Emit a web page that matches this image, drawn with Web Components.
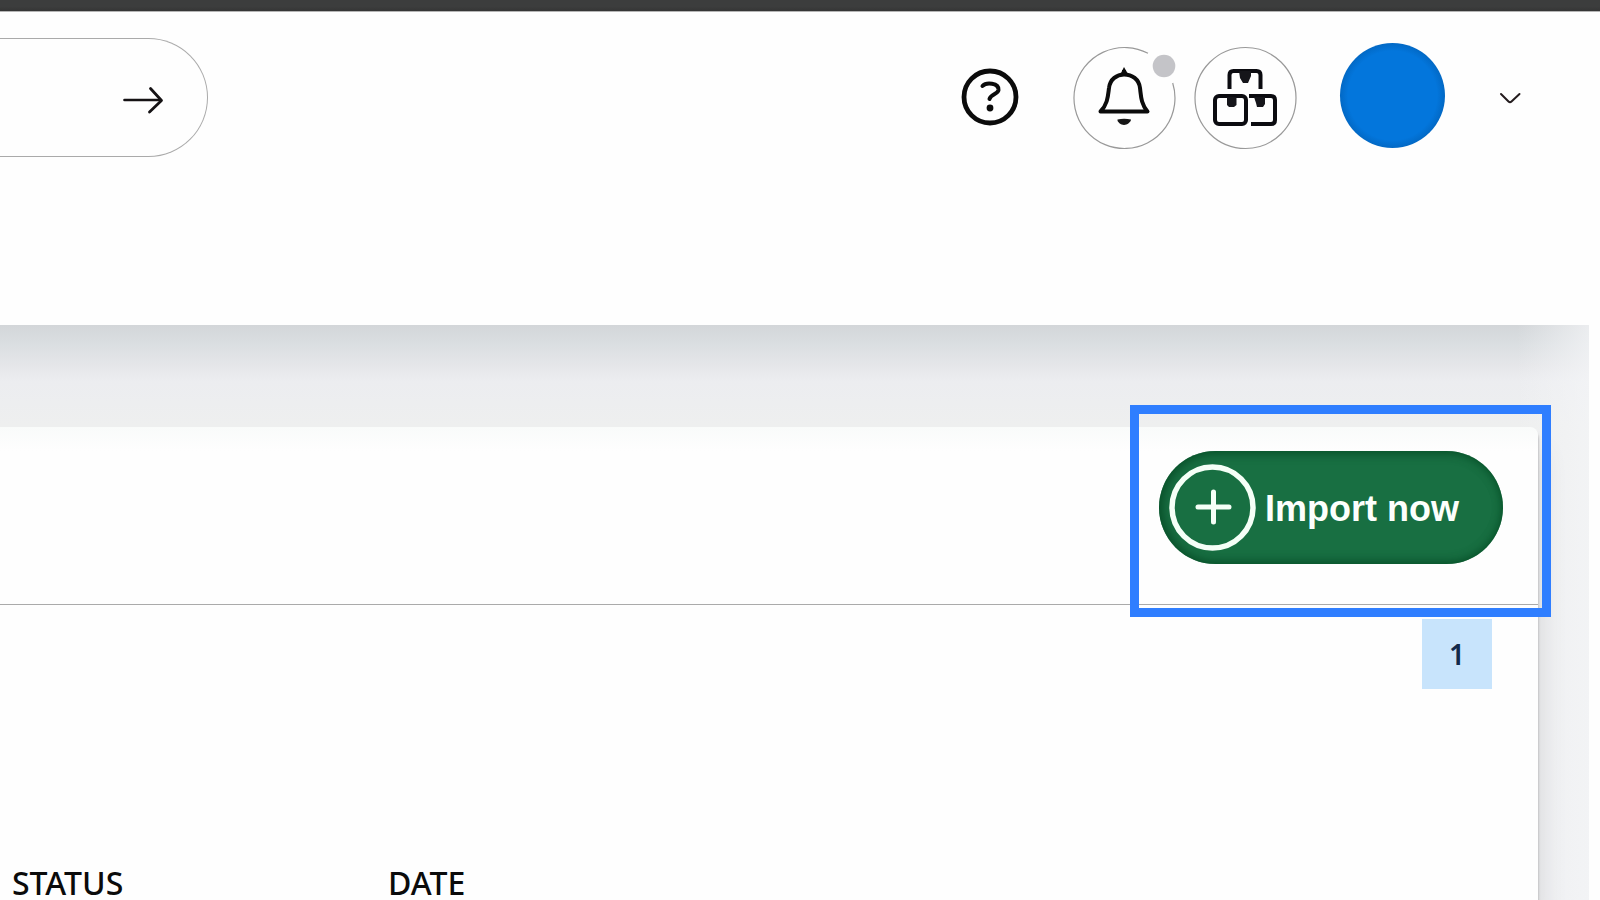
<!DOCTYPE html>
<html lang="en">
<head>
<meta charset="utf-8">
<title>Imports</title>
<style>
html,body{margin:0;min-height:100vh;background:#fefefe;overflow:hidden}
body{font-family:"Noto Sans","Open Sans",sans-serif;color:#0b0b0b}
</style>
</head>
<body>
<app-page>
  <app-header slot="header">
    <search-pill></search-pill>
    <header-actions></header-actions>
  </app-header>
  <data-card>
    <highlight-frame slot="action"><import-button>Import now</import-button></highlight-frame>
    <page-badge slot="pager">1</page-badge>
    <import-table></import-table>
  </data-card>
</app-page>
<script>
const define = (name, html) => {
  const template = document.createElement('template');
  template.innerHTML = html;
  customElements.define(name, class extends HTMLElement {
    constructor() {
      super();
      this.attachShadow({ mode: 'open' }).append(template.content.cloneNode(true));
    }
  });
};

define('app-page', `
<style>
:host{display:flex;flex-direction:column;min-height:100vh}
.strip{flex:none;height:11px;background:linear-gradient(#3c3d3d 60%,#353535);border-bottom:1px solid #b5b5b5}
main{flex:1;display:flex;margin-right:11px;padding:102px 51px 0 0;
 background:linear-gradient(#d3d6d9 0,#d9dde0 16px,#e5e6e9 40px,#ecedf0 56px,#eeefef 100px,#eeeff1 100%);position:relative}
main::before{content:"";position:absolute;inset:0 0 0 auto;width:72px;background:linear-gradient(90deg,#f3f4f600,#f4f5f7bb)}
</style>
<div class="strip"></div>
<slot name="header"></slot>
<main><slot></slot></main>`);

define('app-header', `
<style>
:host{display:flex;flex:none;justify-content:space-between;align-items:flex-start;height:287px;padding-top:26px;background:#fefefe}
</style>
<slot></slot>`);

define('search-pill', `
<style>
:host{display:block;width:13%}
form{display:flex;box-sizing:border-box;height:119px;border:1px solid #aaa;border-left:0;border-radius:0 60px 60px 0;padding-right:43px;align-items:center}
input{flex:1;min-width:0;height:80px;border:0;outline:0;background:none;font:28px "Noto Sans",sans-serif;padding:0 12px}
button{flex:none;border:0;background:none;padding:0;width:42px;height:32px;margin-top:4px}
svg{display:block}
</style>
<form role="search">
<input type="search" aria-label="Search">
<button type="button" aria-label="Submit search"><svg width="42" height="32" viewBox="0 0 42 32" fill="none" stroke="#151214" stroke-linecap="round" stroke-linejoin="round"><path d="M2.500 16H38" stroke-width="2.600"/><path d="M28.500 4.500L39.500 16.500 27.500 28" stroke-width="2.800"/></svg></button>
</form>`);

define('header-actions', `
<style>
:host{display:flex;align-items:center;height:120px;padding-right:78px}
button{border:0;background:none;padding:0;display:block}
svg{display:block}
.help{margin:-2px 54px 0 0}
.bell{margin-right:18px}
.boxes{margin-right:43px}
.avatar{width:105px;height:105px;border-radius:50%;background:radial-gradient(circle,#0376dc 60%,#0268c4 71%);margin:-5px 52px 0 0}
</style>
<button class="help" aria-label="Help"><svg width="58" height="58" viewBox="0 0 58 58" fill="none" stroke="#0b0b0b"><circle cx="29" cy="29" r="26" stroke-width="4.800"/><path d="M21.500 18C25 14 38 14.500 37.500 22C37 26 29.500 26.500 28.500 31" stroke-width="4" stroke-linecap="round"/><circle cx="29" cy="40" r="3.400" fill="#0b0b0b" stroke="none"/></svg></button>
<button class="bell" aria-label="Notifications"><svg width="103" height="104" viewBox="0 0 103 104" fill="none">
<path d="M75 7.300A50.500 50.500 0 1 0 99.700 37" stroke="#999" stroke-width="1.200"/>
<path d="M51 24v4M27.500 65.500C35 58 35 49 36 42C37 33 44 28.500 51 28.500C59 28.500 66 33 67 42C68 50 68 58 74.500 65.500Z" stroke="#0b0b0b" stroke-width="4" stroke-linejoin="round"/>
<path d="M47.500 28L51 21l4 7z" fill="#0b0b0b"/>
<path d="M44.500 73.500Q51 72 58 73.500C58 76 54 79 51 79S44 76 44.500 73.500Z" fill="#161616"/>
<circle cx="91" cy="20" r="11.300" fill="#c4c4c8"/></svg></button>
<button class="boxes" aria-label="Apps"><svg width="103" height="104" viewBox="0 0 103 104" fill="none">
<circle cx="51.500" cy="52" r="50.500" stroke="#999" stroke-width="1.200"/>
<g stroke="#0b0b10" stroke-width="4" stroke-linecap="butt"><path d="M35.500 43V29Q35.500 25 39.500 25H62.500Q66.500 25 66.500 29V43"/><rect x="21" y="50" width="31" height="28" rx="4"/><path d="M55 50H77Q81 50 81 54V74Q81 78 77 78H57"/></g>
<path d="M45 25H57V30L54 37H49L46 32ZM33 51H42.500V59L40 61H35L33 59ZM60 51H71V58L69 61H63L62 57Z" fill="#15151a"/></svg></button>
<button class="avatar" aria-label="Account"></button>
<button aria-label="Open account menu"><svg width="25" height="18" viewBox="0 0 25 18" fill="none" stroke="#241c1e" stroke-width="2" stroke-linecap="round" stroke-linejoin="round"><path d="M4 5L11.500 12.500Q13 14 14.500 12.500L22.500 5"/></svg></button>`);

define('data-card', `
<style>
:host{display:flex;flex-direction:column;flex:1;min-width:0;position:relative;background:linear-gradient(#f9fbfa 0,#fefefe 24px);border-radius:0 8px 0 0;box-shadow:1px 4px 2px #c4c4c6,4px 24px 24px #dadadc}
header{display:flex;justify-content:flex-end;align-items:flex-start;height:153px;padding:24px 35px 0 0;border-bottom:1px solid #aaa;flex:none}
.pager{display:flex;justify-content:flex-end;padding:14px 46px 0 0}
</style>
<header><slot name="action"></slot></header>
<div class="pager"><slot name="pager"></slot></div>
<slot></slot>`);

define('highlight-frame', `
<style>
:host{display:block;position:relative}
:host::after{content:"";position:absolute;inset:-46px -48px -53px -29px;border:9px solid #2f7eff;pointer-events:none}
</style>
<slot></slot>`);

define('import-button', `
<style>
:host{display:block}
button{display:flex;align-items:center;gap:9px;width:344px;height:113px;padding:0 0 0 10px;border:0;border-radius:57px;background:#186f42;box-shadow:inset 0 0 10px #045226,inset 3px 0 12px #0b3f2799;color:#fcfffc;font:700 36px "Liberation Sans",sans-serif;white-space:nowrap}
svg{flex:none}
button span{padding-top:2px}
</style>
<button type="button"><svg width="87" height="87" viewBox="0 0 87 87" fill="none" stroke="#f5fff7" stroke-linecap="round"><circle cx="43.500" cy="43.500" r="40.500" stroke-width="5.500"/><path d="M44.500 28V58M29 43H60" stroke-width="5"/></svg><span><slot></slot></span></button>`);

define('page-badge', `
<style>
:host{display:block}
a{display:flex;align-items:center;justify-content:center;width:70px;height:70px;background:#c8e4fc;color:#12294a;text-decoration:none;font:600 28px "Noto Sans",sans-serif}
</style>
<a href="#" aria-current="page"><slot></slot></a>`);

define('import-table', `
<style>
:host{display:block;padding:178px 12px 0}
table{width:100%;border-collapse:collapse;table-layout:fixed}
th{padding:0;text-align:left;font:500 32px/32px "Noto Sans",sans-serif}
.status{width:376px}
</style>
<table><thead><tr><th class="status" scope="col">STATUS</th><th scope="col">DATE</th></tr></thead></table>`);
</script>
</body>
</html>
